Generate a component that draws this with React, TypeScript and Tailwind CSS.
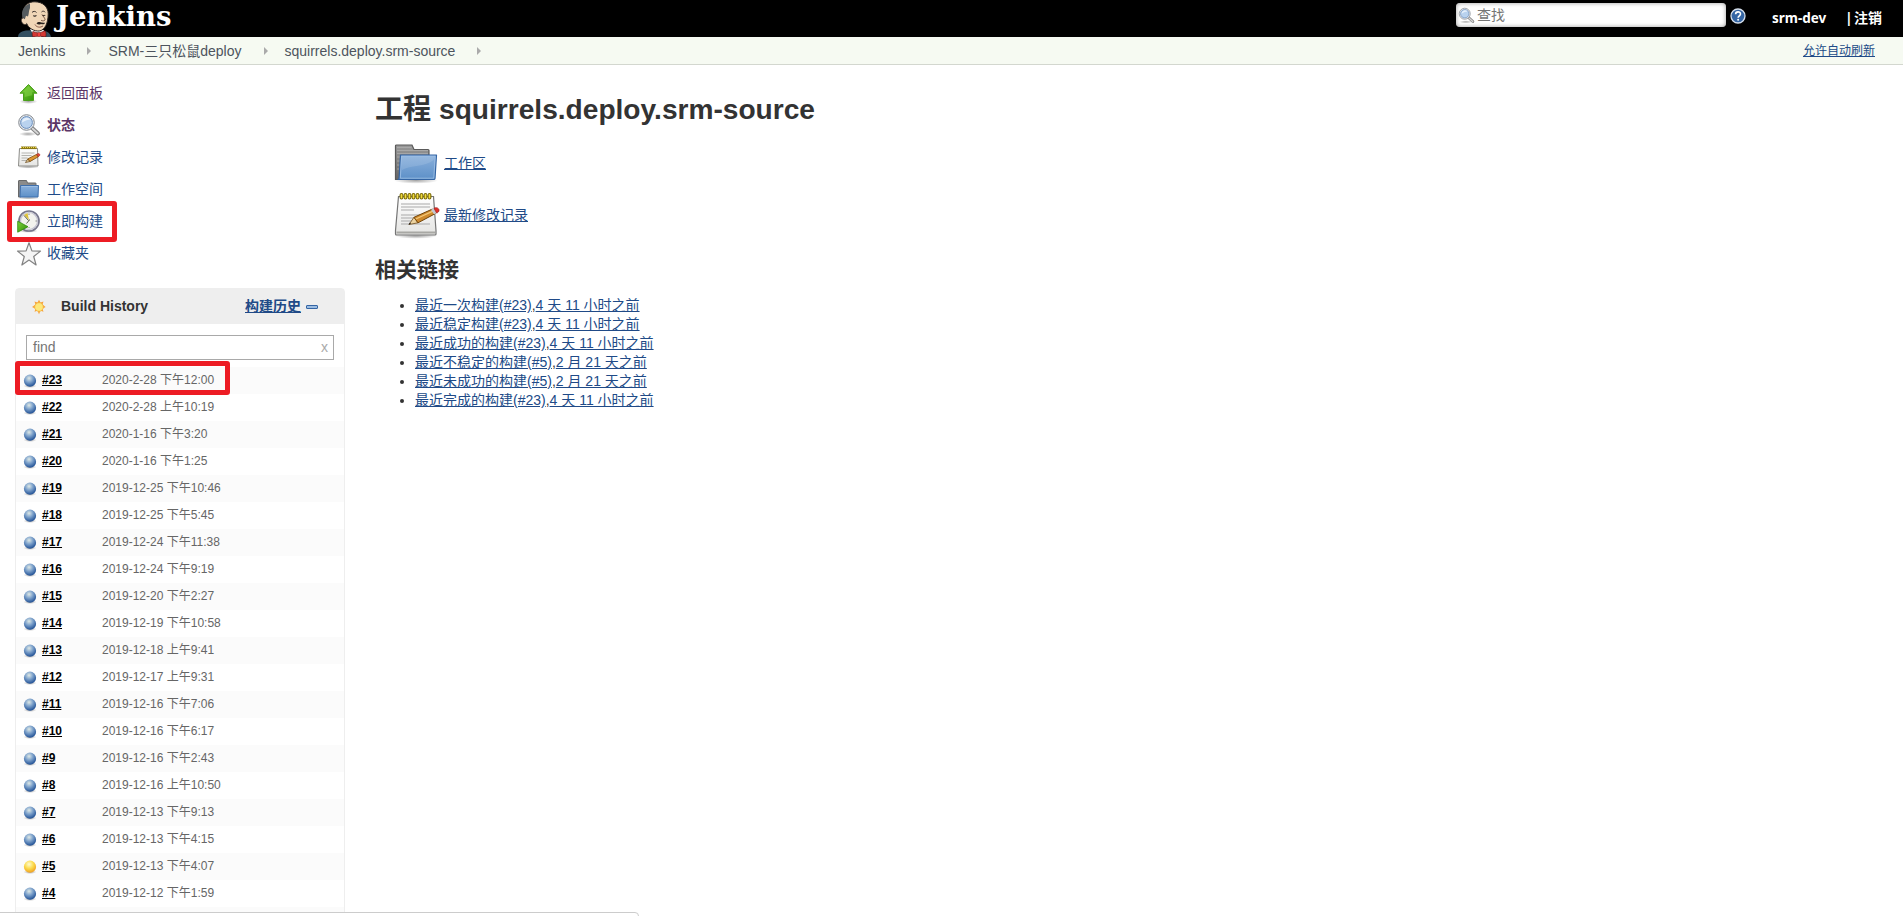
import React from "react";

const builds: [string, string][] = [
  ["#23", "2020-2-28 下午12:00"],
  ["#22", "2020-2-28 上午10:19"],
  ["#21", "2020-1-16 下午3:20"],
  ["#20", "2020-1-16 下午1:25"],
  ["#19", "2019-12-25 下午10:46"],
  ["#18", "2019-12-25 下午5:45"],
  ["#17", "2019-12-24 下午11:38"],
  ["#16", "2019-12-24 下午9:19"],
  ["#15", "2019-12-20 下午2:27"],
  ["#14", "2019-12-19 下午10:58"],
  ["#13", "2019-12-18 上午9:41"],
  ["#12", "2019-12-17 上午9:31"],
  ["#11", "2019-12-16 下午7:06"],
  ["#10", "2019-12-16 下午6:17"],
  ["#9", "2019-12-16 下午2:43"],
  ["#8", "2019-12-16 上午10:50"],
  ["#7", "2019-12-13 下午9:13"],
  ["#6", "2019-12-13 下午4:15"],
  ["#5", "2019-12-13 下午4:07"],
  ["#4", "2019-12-12 下午1:59"],
];

const permalinks: [string, string, string][] = [
  ["最近一次构建", "(#23)", "4 天 11 小时之前"],
  ["最近稳定构建", "(#23)", "4 天 11 小时之前"],
  ["最近成功的构建", "(#23)", "4 天 11 小时之前"],
  ["最近不稳定的构建", "(#5)", "2 月 21 天之前"],
  ["最近未成功的构建", "(#5)", "2 月 21 天之前"],
  ["最近完成的构建", "(#23)", "4 天 11 小时之前"],
];

function Gradients() {
  return (
    <svg width="0" height="0" className="absolute">
      <defs>
        <radialGradient id="blue" cx="0.42" cy="0.3" r="0.7">
          <stop offset="0" stopColor="#dfe9e6" />
          <stop offset="0.45" stopColor="#7fa3cc" />
          <stop offset="1" stopColor="#1f4f94" />
        </radialGradient>
        <radialGradient id="yellow" cx="0.42" cy="0.3" r="0.7">
          <stop offset="0" stopColor="#fffbd0" />
          <stop offset="0.5" stopColor="#fbdc4e" />
          <stop offset="1" stopColor="#f0a020" />
        </radialGradient>
        <linearGradient id="folderFront" x1="0" y1="0" x2="0" y2="1">
          <stop offset="0" stopColor="#8ab0dc" />
          <stop offset="1" stopColor="#5d90c8" />
        </linearGradient>
        <linearGradient id="folderBack" x1="0" y1="0" x2="0" y2="1">
          <stop offset="0" stopColor="#9a9a9a" />
          <stop offset="1" stopColor="#666" />
        </linearGradient>
        <linearGradient id="paper" x1="0" y1="0" x2="0" y2="1">
          <stop offset="0" stopColor="#fff" />
          <stop offset="1" stopColor="#e4e4e2" />
        </linearGradient>
        <linearGradient id="green" x1="0" y1="0" x2="1" y2="1">
          <stop offset="0" stopColor="#7fd03a" />
          <stop offset="1" stopColor="#2f9008" />
        </linearGradient>
        <radialGradient id="shade">
          <stop offset="0" stopColor="#000" stopOpacity="0.35" />
          <stop offset="1" stopColor="#000" stopOpacity="0" />
        </radialGradient>
      </defs>
    </svg>
  );
}

function Butler() {
  return (
    <svg width="34" height="37" viewBox="0 0 34 37" className="block">
      <path d="M0 37c0-3 2-5.500 8-6.500l14-.5c6 1 10 2 11 7z" fill="#335061" />
      <path d="M12 29l5 8h6l3-7z" fill="#fff" />
      <path d="M5 12C6 5 11 1.500 17 1.800c8 .2 13.200 5 13.200 12 0 9-3.200 16.500-9 17.200-5 .5-11-3-12.500-7.500-3-.5-5-3.500-4.200-6z" fill="#f0d6b7" stroke="#2a2320" strokeWidth="1" />
      <path d="M12 3.500C7 5 4 9.500 4 14l.5 4.500 2.300.7 1.200-3.500 2 .8c1.200-3 .5-5.500 2-8.500z" fill="#555b5e" />
      <path d="M5.500 18c-2.500 0-2.800 3-1 5.200 1 1.300 3 1.800 4.200.8" fill="#f0d6b7" stroke="#2a2320" strokeWidth="0.700" />
      <path d="M14 12.500c1-1.500 3.500-1.500 4.500 0M23.500 12c1-1.200 3-1 3.600.3" fill="none" stroke="#2a2320" strokeWidth="0.900" />
      <path d="M15.200 15.600c1 .7 2.400.6 3.200-.3M24.500 15.200c.8.700 2 .6 2.700-.2" fill="none" stroke="#2a2320" strokeWidth="1.100" />
      <path d="M24 14.500c1 2 4.300 4.800 2.500 6-1 .6-2.500.4-3.500-.3" fill="none" stroke="#6a4a3a" strokeWidth="0.900" />
      <path d="M18.500 23.500c1.200-1.700 3-1.600 4.500-1 1.700-.4 3 .7 4 .2-.4 1.700-2.200 2-4 1.300-1.500.8-3.200.8-4.500-.5z" fill="#2a2320" />
      <path d="M17 24.500c1.500 3 5.500 3.400 8 1.400" fill="none" stroke="#7a4a3c" strokeWidth="0.900" />
      <path d="M15 31.500l6 1.700 6-2.500c1.300 1.500 1.300 4.200.6 6.300L21 36l-6 1c-1-1.700-1-4-.2-5.500z" fill="#d33833" stroke="#5a1210" strokeWidth="0.600" />
      <rect x="19.300" y="32.500" width="3.200" height="4" rx="1" fill="#ef3d3a" stroke="#81302f" strokeWidth="0.600" />
    </svg>
  );
}

function Magnifier({ size = 24 }: { size?: number }) {
  return (
    <svg width={size} height={size} viewBox="0 0 24 24" className="block shrink-0">
      <ellipse cx="11" cy="21" rx="9" ry="2.200" fill="url(#shade)" />
      <path d="M14.500 14.500l6.500 6" stroke="#858585" strokeWidth="4" strokeLinecap="round" />
      <path d="M15.500 15.500l5.300 4.900" stroke="#d6d6d6" strokeWidth="1.800" strokeLinecap="round" />
      <circle cx="9.500" cy="9.500" r="7.800" fill="#e9ecef" stroke="#858a90" strokeWidth="1" />
      <circle cx="9.500" cy="9.500" r="5.900" fill="#b9d2ee" stroke="#6c8fbd" strokeWidth="1" />
      <path d="M5 9.500a4.800 4.800 0 0 1 8.500-3c-2 .2-5.500 1-8.500 3z" fill="#e6f0fb" />
    </svg>
  );
}

function UpArrow() {
  return (
    <svg width="24" height="24" viewBox="0 0 24 24" className="block shrink-0">
      <ellipse cx="11.500" cy="20.500" rx="9" ry="2.400" fill="url(#shade)" />
      <path d="M11.500 3.500l8.500 8.700h-3.500v7.300h-10v-7.300H3z" fill="url(#green)" stroke="#4aa01a" strokeWidth="1" strokeLinejoin="round" />
      <path d="M11.500 5l6 6.200h-2.300v3L7.700 16v-4.800H5.500z" fill="#8ad84c" opacity="0.500" />
    </svg>
  );
}

function Notepad() {
  return (
    <svg width="48" height="48" viewBox="0 0 48 48" className="block shrink-0 overflow-visible">
      <ellipse cx="22" cy="45" rx="21" ry="2.800" fill="url(#shade)" />
      <path d="M4.500 5.500h35l2.500 34v3.500a1 1 0 0 1-1 1H2.500a1 1 0 0 1-1-1V39.500z" fill="url(#paper)" stroke="#757575" strokeWidth="1.200" />
      <path d="M2.500 41.500h38.500" stroke="#a8a8a4" strokeWidth="2" />
      <path d="M7 13h29M7 16h29M7 19h13M7 24h28M7 27h20M7 30h13M7 33h29" stroke="#a9a9a9" strokeWidth="1" />
      <g fill="#f3dc3a" stroke="#7a6a08" strokeWidth="1.100">
        {[7, 11, 15, 19, 23, 27, 31, 35].map((x) => (
          <rect key={x} x={x - 0.900} y="2.500" width="2.800" height="5.500" rx="1.400" />
        ))}
      </g>
      <path d="M15 33.500l5-7.300 4 5.600z" fill="#ecd3a0" stroke="#6d4a18" strokeWidth="0.800" strokeLinejoin="round" />
      <path d="M20 26.300L38.500 18l3 4.500L24 31.800z" fill="#cf8a2d" stroke="#714409" strokeWidth="1" strokeLinejoin="round" />
      <path d="M21.700 28l17.800-8.200" stroke="#f3c878" strokeWidth="1.300" />
      <path d="M37 18.700l3-1.400 3 4.600-3 1.400z" fill="#c3c8d0" />
      <path d="M40 17.300c2-1.500 5-.3 5 2 0 1.300-1 2.200-2.300 2.800z" fill="#e02f2a" stroke="#9c1a16" strokeWidth="0.700" />
      <path d="M14.500 33.700l2.500-.9-1.200-1.300z" fill="#222" />
    </svg>
  );
}

function SmallNotepad() {
  return (
    <svg width="24" height="24" viewBox="0 0 24 24" className="block shrink-0">
      <ellipse cx="11.500" cy="22" rx="11" ry="1.600" fill="url(#shade)" />
      <path d="M2.500 3.500h18l.5 17.500H1.500z" fill="url(#paper)" stroke="#8c8c88" strokeWidth="1" />
      <path d="M4 2.800h15.500" stroke="#8a7714" strokeWidth="2.600" />
      <path d="M4 2.500h15.500" stroke="#eed94a" strokeWidth="1.200" strokeDasharray="1 1" />
      <path d="M4.500 8h13M4.500 10.500h10M4.500 13h6M4.500 15.500h11" stroke="#b4b4b0" strokeWidth="1" />
      <path d="M8.500 17.500l2.300-3.600 2.200 2.600z" fill="#ecd3a0" stroke="#5c3c10" strokeWidth="0.700" />
      <path d="M10.800 13.900l8.700-4.500 1.700 2.400-8.200 4.700z" fill="#dc9532" stroke="#7a4b0c" strokeWidth="0.800" />
      <path d="M19.500 9.400l1.500-.8c1.200-.4 2.300.9 1.700 1.900l-1.500 1.300z" fill="#dd4a3a" stroke="#9c1a16" strokeWidth="0.500" />
    </svg>
  );
}

function Folder() {
  return (
    <svg width="48" height="48" viewBox="0 0 48 48" className="block shrink-0">
      <ellipse cx="22" cy="41.500" rx="22" ry="3.200" fill="url(#shade)" />
      <path d="M1.500 40.500V7a1 1 0 0 1 1-1H18l2 4.500h14a1 1 0 0 1 1 1V30L6 40.500z" fill="url(#folderBack)" stroke="#5a5a5a" strokeWidth="1.200" />
      <path d="M3 8.500h14.500M3 11.500h31M3 14.500h31M3 18h3M3 22h3M3 26h3M3 30h3" stroke="#b2b2b2" strokeWidth="0.700" />
      <path d="M6.500 16h36L41 39.500a1.200 1.200 0 0 1-1.200 1H4c.7-.3 1-.7 1.100-1.500z" fill="url(#folderFront)" stroke="#3465a4" strokeWidth="1.200" strokeLinejoin="round" />
      <path d="M7.600 17.300h33.600L39.800 39.200H6.300z" fill="none" stroke="#a9c7ea" strokeWidth="0.700" />
      <path d="M8 31c8-5 24-3 31.500-10l.8-3H8z" fill="#fff" opacity="0.120" />
    </svg>
  );
}

function SmallFolder() {
  return (
    <svg width="24" height="24" viewBox="0 0 24 24" className="block shrink-0">
      <ellipse cx="11.500" cy="21" rx="11.500" ry="1.500" fill="url(#shade)" />
      <path d="M1.500 20V4a.5.5 0 0 1 .5-.5h7.500L10.500 6h8a.5.5 0 0 1 .5.500V15L3 20z" fill="#8b8b8b" stroke="#686868" strokeWidth="1" />
      <path d="M3.500 8.500h18L21 20H3z" fill="url(#folderFront)" stroke="#3f6fac" strokeWidth="1" strokeLinejoin="round" />
      <path d="M4.500 9.500h16" stroke="#a9c7ea" strokeWidth="0.700" />
    </svg>
  );
}

function ClockPlay() {
  return (
    <svg width="24" height="24" viewBox="0 0 24 24" className="block shrink-0">
      <ellipse cx="11" cy="22" rx="10" ry="1.800" fill="url(#shade)" />
      <circle cx="12" cy="12" r="10" fill="#f3f3ee" stroke="#77778c" strokeWidth="1.700" />
      <circle cx="12" cy="12" r="8.500" fill="none" stroke="#c4c4d2" strokeWidth="1.200" />
      <path d="M7 6l3.500-2 1.500 7z" fill="#dfc43a" />
      <path d="M7 6.500l4.500 5 1.500-.8M12 11.500l-2.500 3" fill="none" stroke="#66665a" strokeWidth="1" />
      <path d="M12 4.500V6M12 18v1M18.500 12H20" stroke="#888" strokeWidth="1" />
      <path d="M.7 12.200l10.300 5.500-10.300 5.500z" fill="url(#green)" stroke="#2d8a0a" strokeWidth="0.800" strokeLinejoin="round" />
    </svg>
  );
}

function Star() {
  return (
    <svg width="24" height="24" viewBox="0 -1 24 24" className="block shrink-0 overflow-visible">
      <path d="M12 .8l2.900 8.100 8.600.2-6.800 5.400 2.400 8.500-7.100-4.900L4.900 23l2.400-8.500L.5 9.100l8.600-.2z" fill="#f4f4f4" stroke="#828282" strokeWidth="1.200" strokeLinejoin="round" />
    </svg>
  );
}

function Sun() {
  return (
    <svg width="16" height="16" viewBox="0 0 16 16" className="block shrink-0">
      <path d="M8 .8l1.500 2.700 3-1-1 2.900L14.600 8l-3.100 1.800 1 3-3-1L8 15.200l-1.500-3.400-3 1 1-3L1 8l3.500-2.500-1-3 3 1z" fill="#f6a33c" />
      <circle cx="8" cy="8" r="4.300" fill="#fde87c" stroke="#f3b23c" strokeWidth="0.700" />
    </svg>
  );
}

function Ball({ unstable }: { unstable: boolean }) {
  return (
    <svg width="16" height="16" viewBox="0 0 16 16" className="block shrink-0">
      <ellipse cx="8" cy="14" rx="6.500" ry="2" fill="url(#shade)" />
      <circle cx="8" cy="8.700" r="6.100" fill={unstable ? "url(#yellow)" : "url(#blue)"} />
    </svg>
  );
}

function Crumb({ children }: { children: React.ReactNode }) {
  return (
    <li className="flex items-center">
      <span>{children}</span>
      <svg width="4" height="8" viewBox="0 0 4 8" className="mr-[17px] ml-[22px]">
        <path d="M0 0l4 4-4 4z" fill="#aaa" />
      </svg>
    </li>
  );
}

function Task({ icon, label, className = "text-[#204a87]" }: { icon: React.ReactNode; label: string; className?: string }) {
  return (
    <li className="flex h-8 items-center gap-1.5 pl-[17px]">
      {icon}
      <a className={className}>{label}</a>
    </li>
  );
}

export default function App() {
  return (
    <div className="relative flex h-[916px] w-full flex-col overflow-hidden bg-white font-['Liberation_Sans','Noto_Sans_CJK_SC',sans-serif] text-[14px] leading-[19px] text-[#333]">
      <Gradients />
      <header className="flex h-[37px] shrink-0 justify-between bg-black pl-[18px]">
        <div className="flex items-start gap-[4px]">
          <Butler />
          <span className="font-['DejaVu_Serif','Liberation_Serif',serif] text-[27.500px] leading-[32px] font-bold text-white">Jenkins</span>
        </div>
        <div className="flex items-start pr-[21px] font-['Noto_Sans','Noto_Sans_CJK_SC',sans-serif] text-[14px] font-bold text-white">
          <div className="mt-[3px] flex h-6 w-[270px] items-center gap-[2px] rounded-[4px] bg-white pl-[2px] font-['Liberation_Sans','Noto_Sans_CJK_SC',sans-serif] font-normal text-[#757575] shadow-[inset_0_0_4px_#999]">
            <Magnifier size={17} />
            <span>查找</span>
          </div>
          <svg width="16" height="16" viewBox="0 0 16 16" className="mt-2 ml-[4px]">
            <circle cx="8" cy="8" r="7" fill="#3465a4" stroke="#d5dfec" strokeWidth="1.300" />
            <path d="M5.600 6.200c0-3.200 5-3 4.900-.2 0 1.700-2.400 1.900-2.400 3.700" fill="none" stroke="#fff" strokeWidth="1.600" />
            <circle cx="8.100" cy="11.800" r="1" fill="#fff" />
          </svg>
          <span className="mt-[9px] ml-[26px] w-[73px] text-[13.500px]">srm-dev</span>
          <span className="mt-2 flex gap-[6px]"><span className="w-[3px]">|</span><span>注销</span></span>
        </div>
      </header>
      <nav className="flex h-7 shrink-0 items-center justify-between border-b border-[#d3d7cf] bg-[#f6faf2] pr-[28px] pl-[18px]">
        <ul className="flex pt-px text-[#4d545d]">
          <Crumb>Jenkins</Crumb>
          <Crumb>SRM-三只松鼠deploy</Crumb>
          <Crumb>squirrels.deploy.srm-source</Crumb>
        </ul>
        <a className="pt-px text-[12px] text-[#204a87] underline">允许自动刷新</a>
      </nav>

      <div className="flex min-h-0 flex-1">
        <aside className="w-[375px] shrink-0 pt-[12px]">
          <ul>
            <Task icon={<UpArrow />} label="返回面板" className="text-[#5c3566]" />
            <Task icon={<Magnifier />} label="状态" className="font-bold text-[#5c3566]" />
            <Task icon={<SmallNotepad />} label="修改记录" />
            <Task icon={<SmallFolder />} label="工作空间" />
            <Task icon={<ClockPlay />} label="立即构建" />
            <Task icon={<Star />} label="收藏夹" />
          </ul>

          <section className="mt-[19px] ml-[15px] w-[330px] rounded-t-[4px] border border-[#eee]">
            <div className="flex h-[35px] items-center bg-[#eee] pl-[15px] font-bold">
              <Sun />
              <h2 className="ml-[14px] w-[184px]">Build History</h2>
              <a className="text-[#204a87] underline">构建历史</a>
              <span className="ml-[5px] h-1 w-3 rounded-[1px] border border-[#3465a4] bg-[#9cbde2]" />
            </div>
            <div className="mx-[10px] mt-[11px] mb-[7px] flex h-[25px] items-center justify-between border border-[#a9a9a9] pr-[5px] pl-1.5 text-[#757575]">
              <span>find</span>
              <span className="text-[#aaa]">x</span>
            </div>
            <ul className="text-[12px]">
              {builds.map(([id, date]) => (
                <li key={id} className="flex h-[27px] items-center pb-px pl-1.5 odd:bg-[#fbfbfb]">
                  <Ball unstable={id === "#5"} />
                  <a className="ml-[4px] w-[60px] font-bold text-black underline">{id}</a>
                  <span className="text-[#666]">{date}</span>
                </li>
              ))}
              <li className="h-[27px] bg-[#fbfbfb]" />
            </ul>
          </section>
        </aside>

        <main className="pt-[26px]">
          <h1 className="text-[28.120px] leading-[37px] font-bold">工程 squirrels.deploy.srm-source</h1>
          <div className="mt-[9px] ml-[19px] flex h-[52px] items-center gap-[2px]">
            <Folder />
            <a className="text-[#204a87] underline">工作区</a>
          </div>
          <div className="ml-[19px] flex h-[52px] items-center gap-[2px]">
            <Notepad />
            <a className="text-[#204a87] underline">最新修改记录</a>
          </div>
          <h2 className="mt-[14px] text-[21px] leading-[30px] font-bold">相关链接</h2>
          <ul className="mt-[11px] list-disc pl-10">
            {permalinks.map(([name, num, age]) => (
              <li key={name} className="h-[19px]">
                <a className="text-[#204a87] underline">{name}{num}</a>,<a className="text-[#204a87] underline">{age}</a>
              </li>
            ))}
          </ul>
        </main>
      </div>

      <div className="absolute top-[201px] left-[7px] h-[41px] w-[110px] rounded-[3px] border-5 border-[#ed1c24]" />
      <div className="absolute top-[361px] left-[15px] h-[34px] w-[215px] rounded-[3px] border-5 border-[#ed1c24]" />
      <div className="absolute top-[912px] left-[-1px] h-3 w-[640px] rounded-tr-[4px] border border-[#ccc] bg-white" />
    </div>
  );
}
